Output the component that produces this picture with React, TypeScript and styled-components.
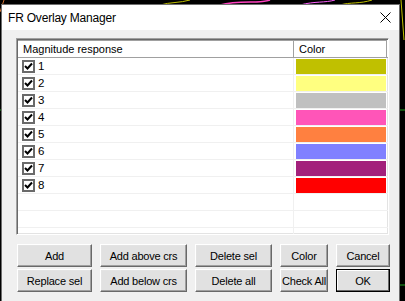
import * as React from "react"
import styled, { createGlobalStyle } from "styled-components"

const GlobalStyle = createGlobalStyle`
  html, body {
    margin: 0;
    padding: 0;
    background: #000;
  }
  body {
    font-family: "Liberation Sans", Arial, sans-serif;
    font-size: 11px;
    color: #000;
  }
`

const Screen = styled.div`
  position: relative;
  width: 405px;
  height: 301px;
  overflow: hidden;
  background: #000;
`

const Backdrop = styled.svg`
  position: absolute;
  left: 0;
  top: 0;
`

const Dialog = styled.div`
  position: relative;
  margin: 5px 0 0 2px;
  width: 397px;
  height: 300px;
  background: #f0f0f0;
  box-shadow: 0 0 0 1px #6e6e6e;
  display: flex;
  flex-direction: column;
`

const TitleBar = styled.div`
  height: 25px;
  background: #fff;
  display: flex;
  align-items: center;
  justify-content: space-between;
  padding: 0 8px 0 6px;
  font-size: 12px;
`

const TitleText = styled.span`
  padding-top: 1px;
  letter-spacing: -0.2px;
`

const Body = styled.div`
  padding: 8px 9px 0 14px;
  display: flex;
  flex-direction: column;
`

const ListBox = styled.div`
  width: 373px;
  height: 197px;
  box-sizing: border-box;
  background: #fff;
  border-style: solid;
  border-width: 1px;
  border-color: #a0a0a0 #fff #fff #a0a0a0;
  box-shadow: inset 1px 1px 0 #696969, inset -1px -1px 0 #e3e3e3;
  padding: 1px 0 0 1px;
  overflow: hidden;
`

const HeaderRow = styled.div`
  display: flex;
  height: 18px;
  background: #fff;
  border-bottom: 1px solid #a0a0a0;
  box-sizing: border-box;
`

const HeaderCell = styled.div<{ $w: number }>`
  width: ${(p) => p.$w}px;
  box-sizing: border-box;
  border-right: 1px solid #a0a0a0;
  border-top: 1px solid #a0a0a0;
  padding: 1px 0 0 5px;
  line-height: 15px;
  font-size: 11px;
  white-space: nowrap;
`

const Row = styled.div`
  display: flex;
  height: 17px;
  box-sizing: border-box;
  border-bottom: 1px solid #f0f0f0;
`

const NameCell = styled.div`
  width: 276px;
  box-sizing: border-box;
  border-right: 1px solid #f0f0f0;
  display: flex;
  align-items: center;
  padding-left: 4px;
  gap: 3px;
  font-size: 11.5px;
`

const ColorCell = styled.div`
  width: 92px;
  box-sizing: border-box;
  padding: 1px 0 0 2px;
`

const Swatch = styled.div<{ $c: string }>`
  height: 15px;
  background: ${(p) => p.$c};
`

const Check = styled.span`
  width: 13px;
  height: 13px;
  box-sizing: border-box;
  border: 2px solid #6a6a6a;
  background: #fff;
  display: flex;
  align-items: center;
  justify-content: center;
`

const ButtonGrid = styled.div`
  margin-top: 9px;
  display: grid;
  grid-template-columns: 75px 87px 77px 48px 54px;
  grid-auto-rows: 23px;
  column-gap: 8px;
  row-gap: 2px;
  padding-left: 1px;
`

const Button = styled.button<{ $default?: boolean }>`
  font-family: "Liberation Sans", Arial, sans-serif;
  font-size: 11px;
  letter-spacing: -0.2px;
  color: #000;
  background: #e1e1e1;
  margin: 0;
  padding: 0;
  white-space: nowrap;
  border-style: solid;
  border-width: 1px;
  border-color: ${(p) => (p.$default ? "#000" : "#fff #696969 #696969 #fff")};
  box-shadow: ${(p) =>
    p.$default
      ? "inset -1px -1px 0 #696969, inset 1px 1px 0 #fff"
      : "inset -1px -1px 0 #a0a0a0, inset 1px 1px 0 #e3e3e3"};
`

const rows = [
  { n: "1", c: "#c0c000" },
  { n: "2", c: "#ffff80" },
  { n: "3", c: "#c0c0c0" },
  { n: "4", c: "#ff55b8" },
  { n: "5", c: "#ff8040" },
  { n: "6", c: "#8080ff" },
  { n: "7", c: "#a3207b" },
  { n: "8", c: "#ff0000" },
]

const buttons = [
  "Add",
  "Add above crs",
  "Delete sel",
  "Color",
  "Cancel",
  "Replace sel",
  "Add below crs",
  "Delete all",
  "Check All",
  "OK",
]

const CheckMark = () => (
  <svg width="9" height="9" viewBox="0 0 9 9">
    <path d="M1 4 L3.5 6.5 L8 1.5" stroke="#000" strokeWidth="2" fill="none" />
  </svg>
)

const CloseIcon = () => (
  <svg width="11" height="11" viewBox="0 0 11 11">
    <path d="M0.5 0.5 L10.5 10.5 M10.5 0.5 L0.5 10.5" stroke="#000" strokeWidth="1" />
  </svg>
)

const App = () => {
  return (
    <Screen>
      <GlobalStyle />
      <Backdrop width="405" height="301" viewBox="0 0 405 301">
        <path d="M0 12 L4 0" stroke="#d07030" strokeWidth="1" fill="none" />
        <path d="M220 5 C240 0 260 4 270 0" stroke="#ff40c0" strokeWidth="1.5" fill="none" />
        <path d="M300 5 C315 1 325 3 335 0" stroke="#ff60ff" strokeWidth="1" fill="none" />
        <path d="M340 5 C350 2 360 4 372 0" stroke="#c0c000" strokeWidth="1" fill="none" />
        <path d="M160 5 C170 2 180 3 190 0" stroke="#c0c000" strokeWidth="1" fill="none" />
        <path d="M399 110 L405 110" stroke="#20a020" strokeWidth="1" />
        <path d="M399 285 L405 285" stroke="#20a020" strokeWidth="1" />
        <path d="M0 110 L2 110" stroke="#20a020" strokeWidth="1" />
        <path d="M401 0 L404 40" stroke="#c0c000" strokeWidth="1" fill="none" />
      </Backdrop>
      <Dialog>
        <TitleBar>
          <TitleText>FR Overlay Manager</TitleText>
          <CloseIcon />
        </TitleBar>
        <Body>
          <ListBox>
            <HeaderRow>
              <HeaderCell $w={276}>Magnitude response</HeaderCell>
              <HeaderCell $w={93}>Color</HeaderCell>
            </HeaderRow>
            {rows.map((r) => (
              <Row key={r.n}>
                <NameCell>
                  <Check>
                    <CheckMark />
                  </Check>
                  {r.n}
                </NameCell>
                <ColorCell>
                  <Swatch $c={r.c} />
                </ColorCell>
              </Row>
            ))}
            <Row>
              <NameCell />
              <ColorCell />
            </Row>
            <Row>
              <NameCell />
              <ColorCell />
            </Row>
            <Row>
              <NameCell />
              <ColorCell />
            </Row>
          </ListBox>
          <ButtonGrid>
            {buttons.map((b) => (
              <Button key={b} $default={b === "OK"}>
                {b}
              </Button>
            ))}
          </ButtonGrid>
        </Body>
      </Dialog>
    </Screen>
  )
}

export default App
